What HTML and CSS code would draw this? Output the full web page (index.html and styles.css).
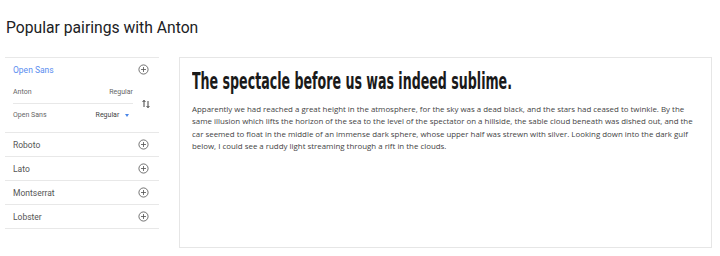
FILE: index.html
```html
<!DOCTYPE html>
<html>
<head>
<meta charset="utf-8">
<link rel="stylesheet" href="styles.css">
</head>
<body>
<div class="page">
  <h1 class="title">Popular pairings with Anton</h1>
  <div class="layout">
    <div class="panel">
      <div class="group">
        <div class="row head">
          <span class="name active">Open Sans</span>
          <svg class="plus" viewBox="0 0 12 12"><circle cx="6" cy="6" r="5" /><path d="M6 3.3v5.4M3.3 6h5.4" /></svg>
        </div>
        <div class="pair">
          <div class="pair-rows">
            <div class="sub"><span>Anton</span><span>Regular</span></div>
            <div class="sub"><span>Open Sans</span><span class="sel">Regular <i class="caret"></i></span></div>
          </div>
          <svg class="swap" viewBox="0 0 8 10"><path d="M2 8V1.5M0.6 3L2 1.3 3.4 3M6 2v6.5M4.6 7L6 8.7 7.4 7" /></svg>
        </div>
      </div>
      <div class="row"><span class="name">Roboto</span><svg class="plus" viewBox="0 0 12 12"><circle cx="6" cy="6" r="5" /><path d="M6 3.3v5.4M3.3 6h5.4" /></svg></div>
      <div class="row"><span class="name">Lato</span><svg class="plus" viewBox="0 0 12 12"><circle cx="6" cy="6" r="5" /><path d="M6 3.3v5.4M3.3 6h5.4" /></svg></div>
      <div class="row"><span class="name">Montserrat</span><svg class="plus" viewBox="0 0 12 12"><circle cx="6" cy="6" r="5" /><path d="M6 3.3v5.4M3.3 6h5.4" /></svg></div>
      <div class="row"><span class="name">Lobster</span><svg class="plus" viewBox="0 0 12 12"><circle cx="6" cy="6" r="5" /><path d="M6 3.3v5.4M3.3 6h5.4" /></svg></div>
    </div>
    <div class="card">
      <h2 class="headline">The spectacle before us was indeed sublime.</h2>
      <p class="body">Apparently we had reached a great height in the atmosphere, for the sky was a dead black, and the stars had ceased to twinkle. By the same illusion which lifts the horizon of the sea to the level of the spectator on a hillside, the sable cloud beneath was dished out, and the car seemed to float in the middle of an immense dark sphere, whose upper half was strewn with silver. Looking down into the dark gulf below, I could see a ruddy light streaming through a rift in the clouds.</p>
    </div>
  </div>
</div>
</body>
</html>
```

FILE: styles.css
```css
html, body {
  margin: 0;
  background: #fff;
}
.page {
  padding: 0 8px 0 5px;
  font-family: Roboto, "Liberation Sans", sans-serif;
}
.title {
  margin: 0;
  padding: 18px 0 0 1px;
  height: 57px;
  box-sizing: border-box;
  font-size: 15.7px;
  font-weight: 400;
  color: #202124;
  line-height: 20px;
}
.layout {
  display: flex;
  gap: 20px;
}
.panel {
  width: 154px;
  flex: none;
  border-top: 1px solid #e8e8e8;
}
.group {
  border-bottom: 1px solid #e8e8e8;
  height: 75px;
  box-sizing: border-box;
}
.row {
  display: flex;
  align-items: center;
  justify-content: space-between;
  height: 24px;
  padding: 0 8px;
  border-bottom: 1px solid #e8e8e8;
  box-sizing: border-box;
}
.row.head {
  border-bottom: none;
  height: 23px;
}
.name {
  font-size: 8.5px;
  color: #555;
}
.name.active {
  color: #5b8def;
}
.plus {
  width: 11px;
  height: 11px;
  margin-right: 2px;
  fill: none;
  stroke: #555;
  stroke-width: 0.9;
}
.pair {
  display: flex;
  align-items: center;
  padding-left: 8px;
}
.pair-rows {
  width: 120px;
}
.sub {
  display: flex;
  justify-content: space-between;
  align-items: center;
  height: 22px;
  font-size: 7px;
  color: #666;
}
.sub + .sub {
  border-top: 1px solid #e8e8e8;
}
.sel {
  color: #444;
  padding-right: 4px;
}
.caret {
  display: inline-block;
  width: 0;
  height: 0;
  border-left: 2.5px solid transparent;
  border-right: 2.5px solid transparent;
  border-top: 3px solid #4a86e8;
  margin-left: 4px;
  vertical-align: middle;
}
.swap {
  width: 8px;
  height: 10px;
  margin-left: 9px;
  fill: none;
  stroke: #444;
  stroke-width: 1;
}
.card {
  flex: 1;
  min-width: 0;
  height: 191px;
  box-sizing: border-box;
  border: 1px solid #e6e6e6;
  padding: 9px 12px;
  overflow: hidden;
}
.headline {
  margin: 0;
  display: block;
  width: 600px;
  white-space: nowrap;
  font-family: "DejaVu Sans Condensed", "DejaVu Sans", sans-serif;
  font-weight: 700;
  font-size: 23px;
  line-height: 28px;
  color: #1a1a1a;
  transform: scaleX(0.61);
  transform-origin: left center;
}
.body {
  margin: 8px 0 0;
  font-family: "Open Sans", sans-serif;
  font-size: 7.9px;
  line-height: 12.3px;
  color: #444;
}
```
